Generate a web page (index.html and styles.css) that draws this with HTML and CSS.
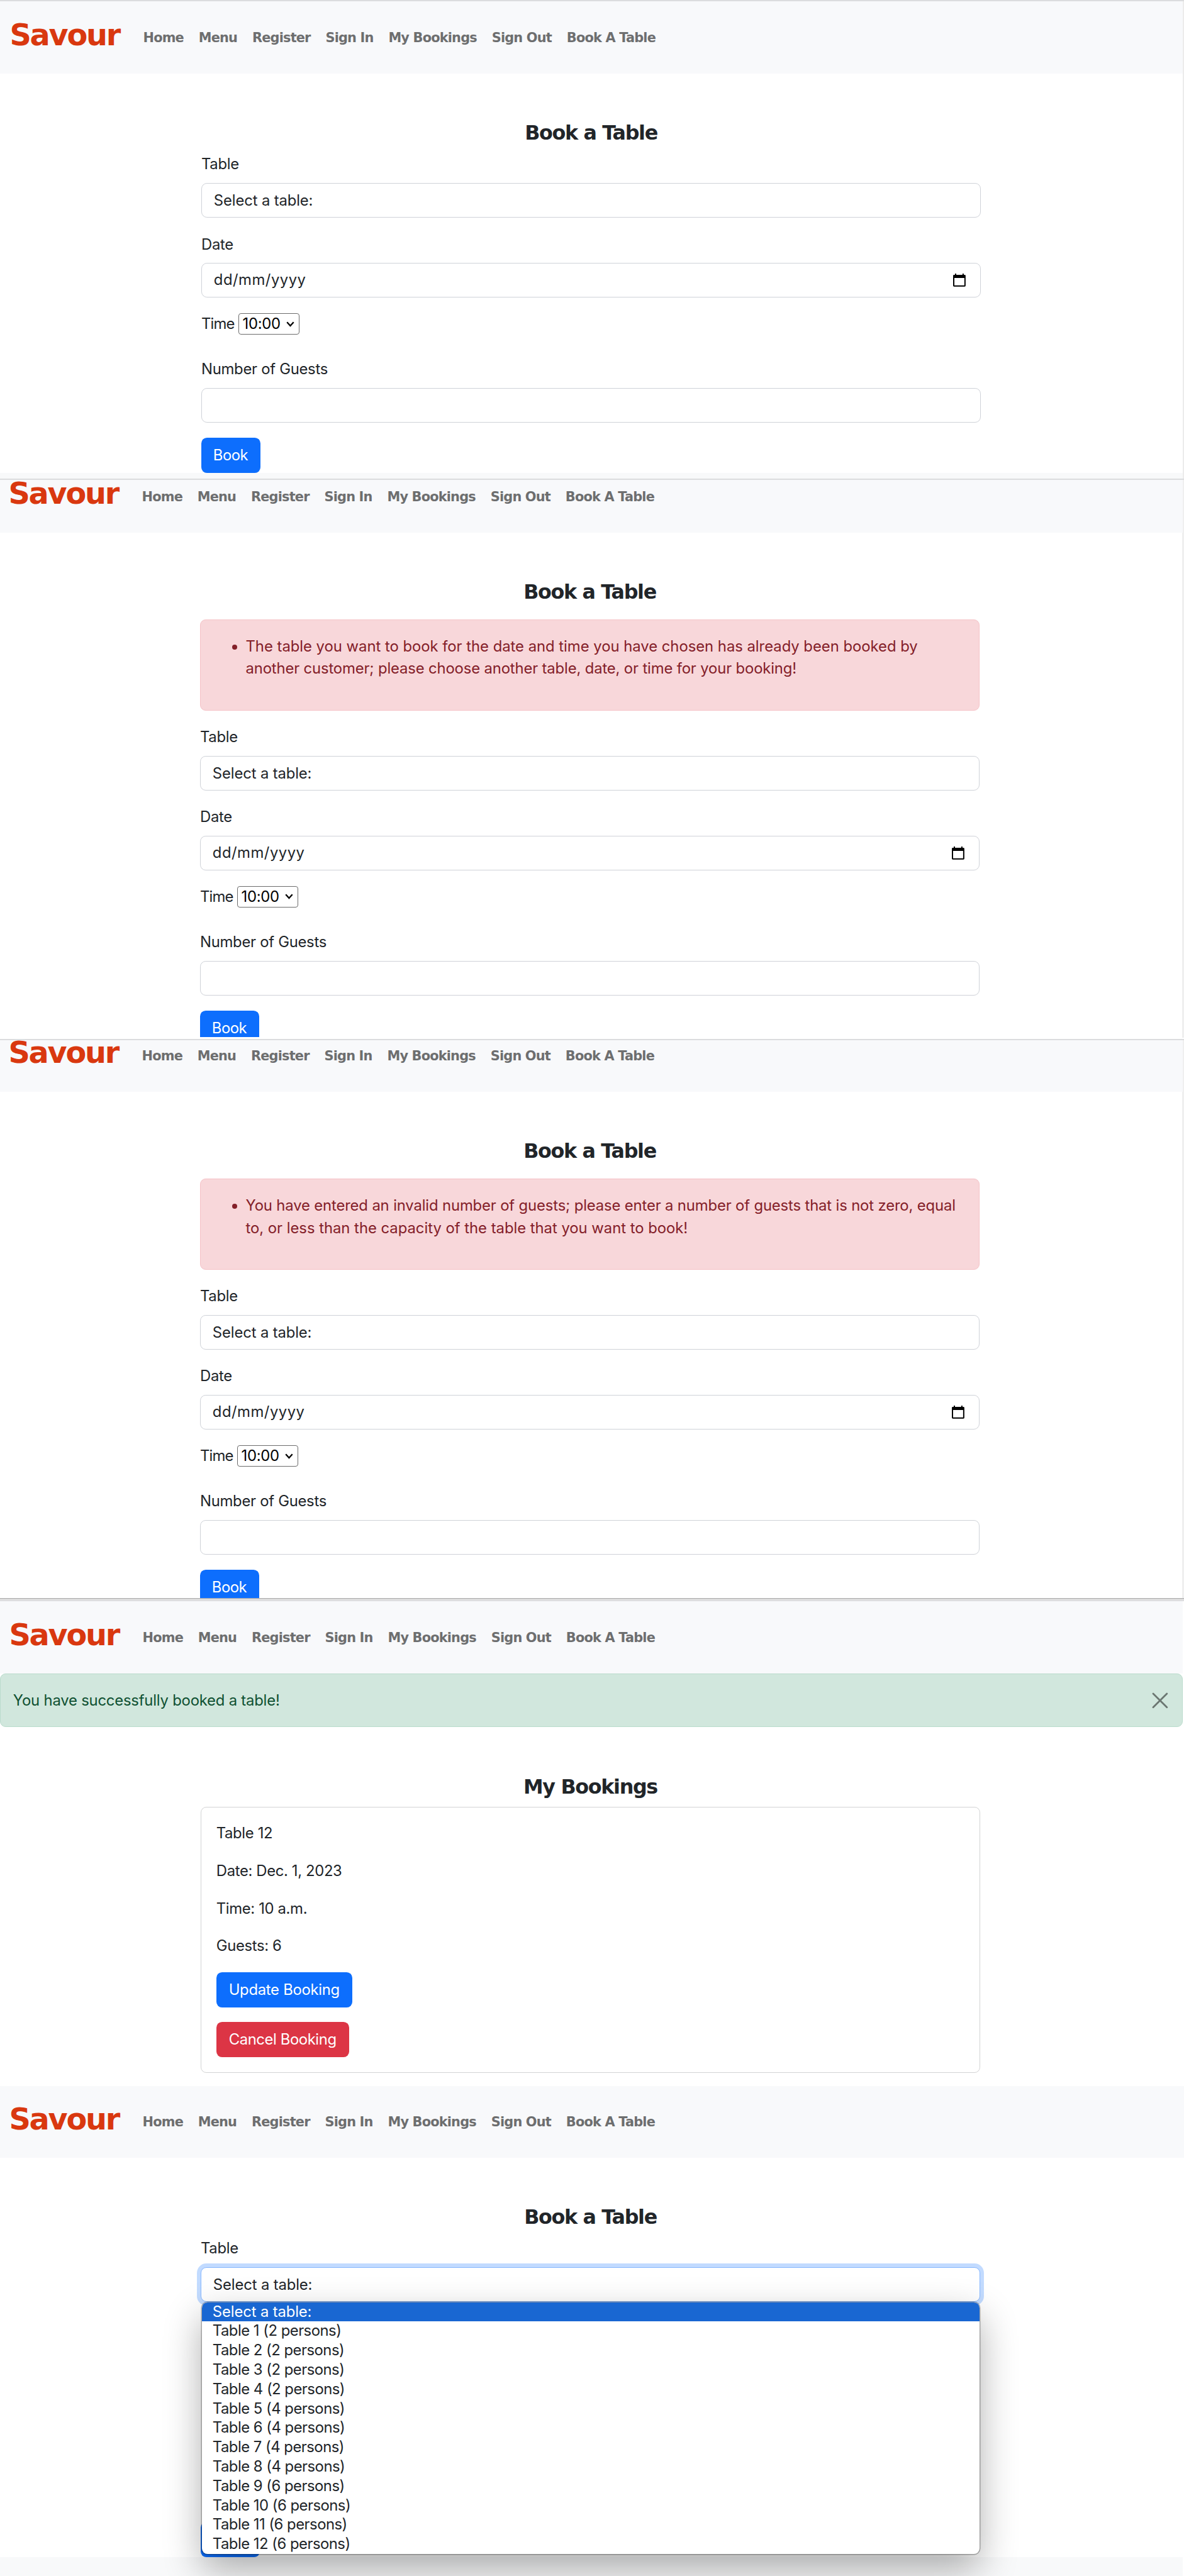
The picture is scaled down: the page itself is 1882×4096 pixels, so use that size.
FILE: index.html
```html
<!DOCTYPE html>
<html lang="en">
<head>
<meta charset="utf-8">
<title>Savour</title>
<link rel="stylesheet" href="styles.css">
</head>
<body>
<div class="page">

<section class="screen screen--first">
  <div class="rule"></div>
  <header class="navbar"><div class="navbar__inner">
    <a class="brand">Savour</a>
    <nav class="nav"><a>Home</a><a>Menu</a><a>Register</a><a>Sign In</a><a>My Bookings</a><a>Sign Out</a><a>Book A Table</a></nav>
  </div></header>
  <main class="container">
    <h1 class="title">Book a Table</h1>
    <label class="label">Table</label>
    <div class="control">Select a table:</div>
    <label class="label">Date</label>
    <div class="control control--date"><span>dd/mm/yyyy</span><svg class="calendar" viewBox="0 0 20 21"><path d="M3 0h2v2h10V0h2v2h1.500a1.500 1.500 0 0 1 1.500 1.500v16a1.500 1.500 0 0 1-1.500 1.500h-17A1.500 1.500 0 0 1 0 19.500v-16A1.500 1.500 0 0 1 1.500 2H3zM2 7v12h16V7z" fill-rule="evenodd"/></svg></div>
    <div class="time"><span>Time</span><div class="time__select">10:00<svg viewBox="0 0 13 9"><path d="M1.200 1.200 6.500 7l5.300-5.800"/></svg></div></div>
    <label class="label">Number of Guests</label>
    <div class="control"></div>
    <a class="btn btn--primary btn--book">Book</a>
  </main>
  <footer class="footer"></footer>
</section>

<section class="screen screen--second">
  <div class="rule"></div>
  <header class="navbar"><div class="navbar__inner">
    <a class="brand">Savour</a>
    <nav class="nav"><a>Home</a><a>Menu</a><a>Register</a><a>Sign In</a><a>My Bookings</a><a>Sign Out</a><a>Book A Table</a></nav>
  </div></header>
  <main class="container">
    <h1 class="title">Book a Table</h1>
    <ul class="alert alert--danger"><li><span class="loose">The table you want to book for the date and time you have chosen has already been booked by</span><br>another customer; please choose another table, date, or time for your booking!</li></ul>
    <label class="label">Table</label>
    <div class="control">Select a table:</div>
    <label class="label">Date</label>
    <div class="control control--date"><span>dd/mm/yyyy</span><svg class="calendar" viewBox="0 0 20 21"><path d="M3 0h2v2h10V0h2v2h1.500a1.500 1.500 0 0 1 1.500 1.500v16a1.500 1.500 0 0 1-1.500 1.500h-17A1.500 1.500 0 0 1 0 19.500v-16A1.500 1.500 0 0 1 1.500 2H3zM2 7v12h16V7z" fill-rule="evenodd"/></svg></div>
    <div class="time"><span>Time</span><div class="time__select">10:00<svg viewBox="0 0 13 9"><path d="M1.200 1.200 6.500 7l5.300-5.800"/></svg></div></div>
    <label class="label">Number of Guests</label>
    <div class="control"></div>
    <a class="btn btn--primary btn--book">Book</a>
  </main>
</section>

<section class="screen screen--third">
  <div class="rule"></div>
  <header class="navbar"><div class="navbar__inner">
    <a class="brand">Savour</a>
    <nav class="nav"><a>Home</a><a>Menu</a><a>Register</a><a>Sign In</a><a>My Bookings</a><a>Sign Out</a><a>Book A Table</a></nav>
  </div></header>
  <main class="container">
    <h1 class="title">Book a Table</h1>
    <ul class="alert alert--danger"><li>You have entered an invalid number of guests; please enter a number of guests that is not zero, equal<br><span class="loose">to, or less than the capacity of the table that you want to book!</span></li></ul>
    <label class="label">Table</label>
    <div class="control">Select a table:</div>
    <label class="label">Date</label>
    <div class="control control--date"><span>dd/mm/yyyy</span><svg class="calendar" viewBox="0 0 20 21"><path d="M3 0h2v2h10V0h2v2h1.500a1.500 1.500 0 0 1 1.500 1.500v16a1.500 1.500 0 0 1-1.500 1.500h-17A1.500 1.500 0 0 1 0 19.500v-16A1.500 1.500 0 0 1 1.500 2H3zM2 7v12h16V7z" fill-rule="evenodd"/></svg></div>
    <div class="time"><span>Time</span><div class="time__select">10:00<svg viewBox="0 0 13 9"><path d="M1.200 1.200 6.500 7l5.300-5.800"/></svg></div></div>
    <label class="label">Number of Guests</label>
    <div class="control"></div>
    <a class="btn btn--primary btn--book">Book</a>
  </main>
</section>

<section class="screen screen--bookings">
  <div class="rule rule--dark"></div>
  <div class="rule"></div>
  <header class="navbar"><div class="navbar__inner">
    <a class="brand">Savour</a>
    <nav class="nav"><a>Home</a><a>Menu</a><a>Register</a><a>Sign In</a><a>My Bookings</a><a>Sign Out</a><a>Book A Table</a></nav>
  </div></header>
  <div class="alert alert--success"><span>You have successfully booked a table!</span><svg class="close" viewBox="0 0 26 26"><path d="M2 2l22 22M24 2L2 24"/></svg></div>
  <main class="container">
    <h1 class="title">My Bookings</h1>
    <div class="card">
      <p>Table 12</p>
      <p>Date: Dec. 1, 2023</p>
      <p>Time: 10 a.m.</p>
      <p>Guests: 6</p>
      <a class="btn btn--primary">Update Booking</a>
      <a class="btn btn--danger">Cancel Booking</a>
    </div>
  </main>
</section>

<section class="screen screen--menu">
  <header class="navbar"><div class="navbar__inner">
    <a class="brand">Savour</a>
    <nav class="nav"><a>Home</a><a>Menu</a><a>Register</a><a>Sign In</a><a>My Bookings</a><a>Sign Out</a><a>Book A Table</a></nav>
  </div></header>
  <main class="container">
    <h1 class="title">Book a Table</h1>
    <label class="label">Table</label>
    <div class="control control--focus">Select a table:
      <ul class="dropdown">
        <li class="is-active">Select a table:</li>
        <li>Table 1 (2 persons)</li>
        <li>Table 2 (2 persons)</li>
        <li>Table 3 (2 persons)</li>
        <li>Table 4 (2 persons)</li>
        <li>Table 5 (4 persons)</li>
        <li>Table 6 (4 persons)</li>
        <li>Table 7 (4 persons)</li>
        <li>Table 8 (4 persons)</li>
        <li>Table 9 (6 persons)</li>
        <li>Table 10 (6 persons)</li>
        <li>Table 11 (6 persons)</li>
        <li>Table 12 (6 persons)</li>
      </ul>
    </div>
    <div class="covered"></div>
    <a class="btn btn--primary btn--book"></a>
  </main>
  <footer class="footer"></footer>
</section>

</div>
</body>
</html>
```
FILE: styles.css
```css
* { box-sizing: border-box; }

body { margin: 0; background: #fff; }

.page {
  zoom: 0.99367;
  width: 1894px;
  height: 4122px;
  overflow: hidden;
  display: flex;
  flex-direction: column;
  font: 24px/36px Inter, sans-serif;
  letter-spacing: -0.25px;
  color: #212529;
}

/* Screens */
.screen {
  --left: 320px;
  --shift: 0px;
  flex: none;
  overflow: hidden;
  display: flex;
  flex-direction: column;
  background: linear-gradient(to left, #efefef 3px, #fff 3px);
}
.screen--first { --left: 322px; height: 766px; background: linear-gradient(to left, #ececec 2px, #fff 2px); }
.screen--second { --shift: -32px; height: 897px; border-bottom: 3px solid #fff; overflow: visible; }
.screen--third { --shift: -34px; height: 894px; overflow: visible; }
.screen--bookings { --left: 321px; height: 781px; background: #fff; }
.screen--menu { --left: 321px; --shift: -1px; height: 784px; background: #fff; }

.rule { flex: none; height: 2px; background: #dbdcde; }
.rule--dark { height: 3px; background: #bdbdbd; border-bottom: 1px solid #f0f0f0; }

/* Navbar */
.navbar { flex: none; height: 116px; background: #f8f9fb; margin-right: 2px; }
.screen--second .navbar { height: 84px; }
.screen--third .navbar { height: 82px; }
.screen--menu .navbar { height: 115px; margin-right: 0; }
.navbar__inner {
  display: flex;
  align-items: flex-start;
  padding: calc(34px + var(--shift)) 0 0 calc(var(--left) - 306.5px);
  font-family: "DejaVu Sans", sans-serif;
  font-weight: 700;
}
.brand { width: 213.500px; font-size: 48px; line-height: 40px; letter-spacing: -2.200px; color: #d9380f; }
.nav { display: flex; gap: 24px; margin-top: 7.500px; font-size: 21px; line-height: 36px; letter-spacing: -0.820px; color: #6d6e6f; white-space: nowrap; }

/* Content */
.container { flex: none; width: 1247px; margin-left: var(--left); padding-top: 76px; display: flex; flex-direction: column; align-items: stretch; }
.screen--first .container,
.screen--menu .container { padding-top: 75px; }
.screen--second .container { height: 808px; overflow: hidden; }
.screen--third .container { height: 810px; overflow: hidden; }
.title { flex: none; margin: 0 0 14px; font: 700 32px/38px "DejaVu Sans", sans-serif; letter-spacing: -1.350px; text-align: center; }
.screen--bookings .title { margin-bottom: 13px; }
.label { flex: none; height: 34px; line-height: 36px; margin-bottom: 14px; letter-spacing: -0.270px; }
.control { flex: none; position: relative; height: 55.500px; margin-bottom: 24.400px; padding: 0 19px; border: 1px solid #cfd2d8; border-radius: 9px; line-height: 55px; letter-spacing: -0.130px; background: #fff; }
.control--date { display: flex; align-items: center; justify-content: space-between; letter-spacing: 0.500px; }
.calendar { width: 20px; height: 21px; margin-right: 4px; }
.time { flex: none; display: flex; align-items: center; gap: 4px; height: 34px; margin-top: 0.800px; margin-bottom: 37.500px; }
.time span { width: 55px; letter-spacing: -0.800px; line-height: 34px; white-space: nowrap; }
.time__select { width: 98px; height: 34px; padding: 0 7px 0 6px; display: flex; align-items: center; justify-content: space-between; border: 1px solid #6b6b6b; border-radius: 4px; line-height: 32px; letter-spacing: -0.300px; color: #000; }
.time__select svg { width: 13px; height: 9px; fill: none; stroke: #000; stroke-width: 2.300; }

.btn { flex: none; align-self: flex-start; height: 56px; padding: 0 20px; border-radius: 9px; line-height: 57px; letter-spacing: -0.280px; color: #fff; white-space: nowrap; }
.btn--book { width: 95px; padding: 0 19px; letter-spacing: -0.500px; }
.btn--primary { background: #0d6efd; }
.btn--danger { background: #dc3545; letter-spacing: -0.400px; }
.footer { flex: none; height: 40px; background: #f8f9fa; margin-right: 2px; }

/* Alerts */
.alert { flex: none; margin: 0; border: 1px solid; border-radius: 9px; }
.alert--danger { margin: 11px 0 24.500px; height: 146px; padding: 24px 0 0 72px; background: #f8d7da; border-color: #f5c2c7; color: #842029; letter-spacing: -0.140px; white-space: nowrap; }
.loose { letter-spacing: -0.020px; }
.alert--success { height: 86px; margin-right: 2px; padding: 0 22px 0 20px; display: flex; align-items: center; justify-content: space-between; background: #d1e7dd; border-color: #badbcc; color: #0f5132; letter-spacing: -0.200px; }
.close { width: 26px; height: 26px; fill: none; stroke: #6b7671; stroke-width: 2.800; stroke-linecap: round; }

/* Booking card */
.card { height: 426px; padding: 24px; border: 1px solid #d2d3d4; border-radius: 9px; display: flex; flex-direction: column; gap: 24px; }
.card p { margin: 0; letter-spacing: -0.350px; }

/* Open select */
.control--focus { border-color: #86b7fe; box-shadow: 0 0 0 6px #c2dbff; }
.dropdown { position: absolute; z-index: 2; left: 1px; right: 0; top: 55px; margin: 0; padding: 0; list-style: none; background: #fff; border-radius: 9px; overflow: hidden; box-shadow: 0 0 0 1.500px rgba(0,0,0,.28), 0 24px 60px rgba(0,0,0,.32); }
.dropdown li { height: 31px; padding-left: 17px; line-height: 30px; letter-spacing: -0.500px; }
.dropdown li.is-active { background: #1967d2; color: #fff; letter-spacing: -0.130px; }
.covered { height: 328px; }
```
